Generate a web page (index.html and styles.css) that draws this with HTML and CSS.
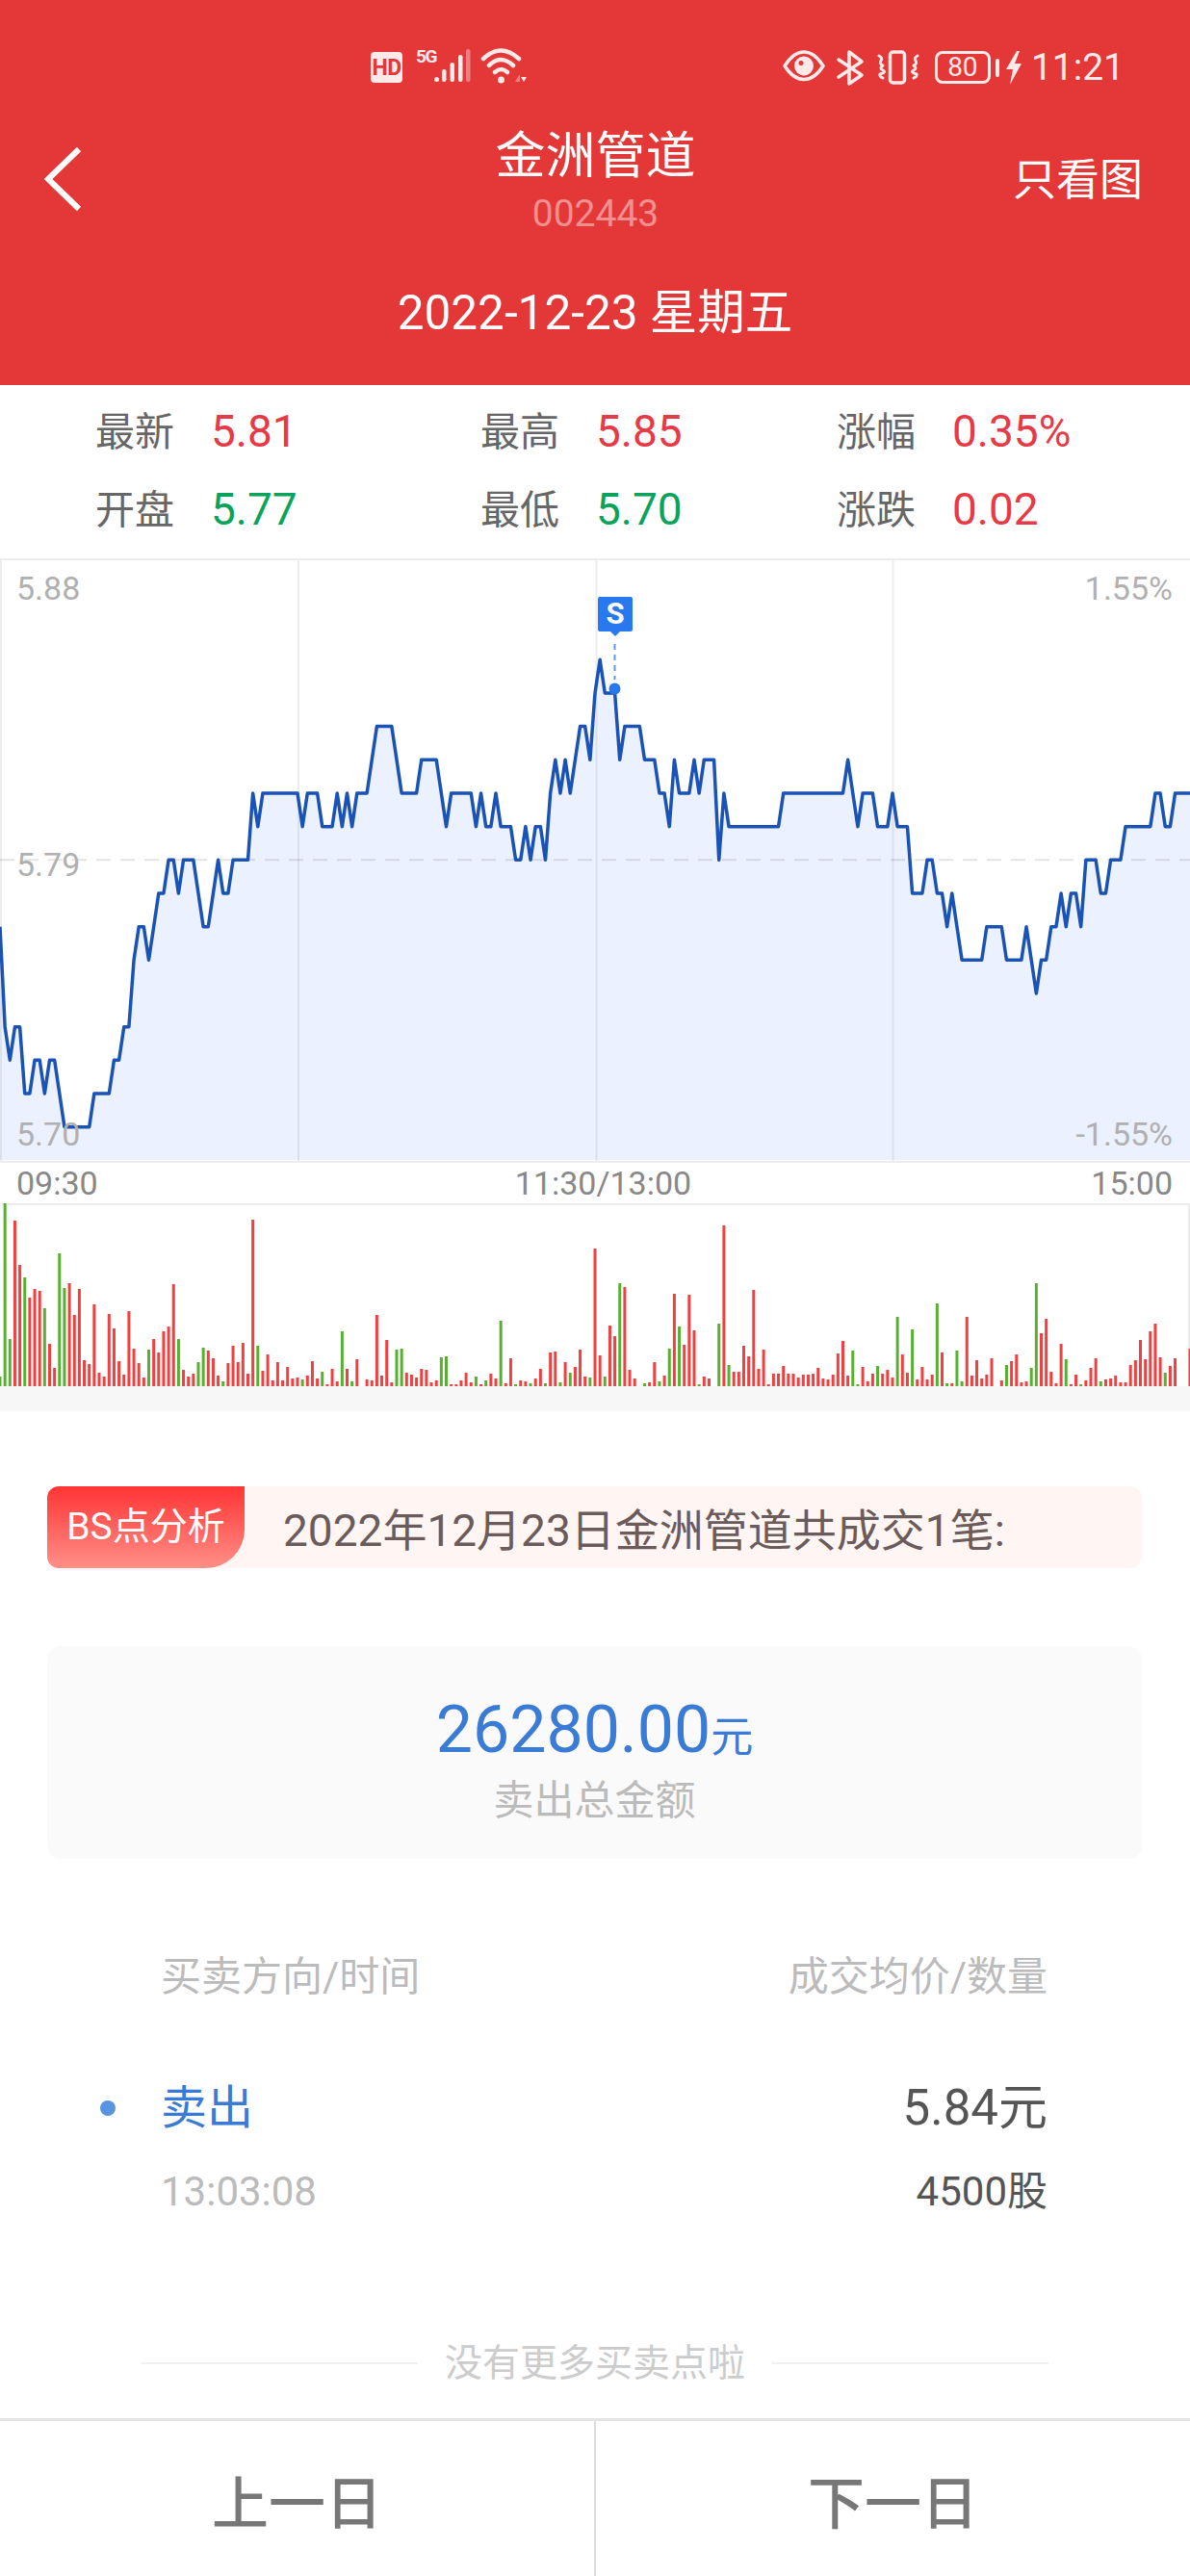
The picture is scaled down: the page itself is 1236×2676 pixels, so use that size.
FILE: index.html
```html
<!DOCTYPE html>
<html lang="zh-CN">
<head>
<meta charset="utf-8">
<title>金洲管道 BS点分析</title>
<link rel="stylesheet" href="styles.css">
</head>
<body>
<div class="page">
  <header class="header">
    <div class="status">
      <div class="status-left">
        <span class="hd">HD</span>
        <span class="net">5G</span>
        <svg class="ico ico-signal" viewBox="451 50 40 40">
          <circle class="fill" cx="453.5" cy="82.5" r="2.5"/>
          <rect class="fill" x="459" y="72" width="4.5" height="13" rx="2.2"/>
          <rect class="fill" x="467.5" y="65" width="4.5" height="20" rx="2.2"/>
          <rect class="fill" x="476" y="57" width="4.5" height="28" rx="2.2"/>
          <rect class="fill faint" x="484" y="51" width="4.5" height="34" rx="2.2"/>
        </svg>
        <svg class="ico ico-wifi" viewBox="498 50 54 40">
          <path class="line" d="M502 61Q520 44 539 61"/>
          <path class="line" d="M508 68Q520 56 533 68"/>
          <path class="line" d="M514 75Q520.500 69 527 75"/>
          <circle class="fill" cx="520.500" cy="83" r="3.500"/>
          <path class="fill faint" d="M535 85l4-7h1v7z"/>
          <path class="fill" d="M541 80h6l-3 5z"/>
        </svg>
      </div>
      <div class="status-right">
        <svg class="ico ico-eye" viewBox="815 50 44 40">
          <path class="line thin" d="M817 68.500Q826 54 837 54Q848 54 857 68.500Q848 82.500 837 82.500Q826 82.500 817 68.500Z"/>
          <circle class="fill" cx="837" cy="68.500" r="10"/>
          <circle class="hole" cx="834" cy="65.500" r="2.500"/>
        </svg>
        <svg class="ico ico-bt" viewBox="870 50 32 40">
          <path class="line thin" d="M873 62L897 78L884 87V54L897 64L873 80"/>
        </svg>
        <svg class="ico ico-vib" viewBox="911 50 49 40">
          <rect class="line thin" x="926.500" y="54" width="15" height="32" rx="3"/>
          <path class="line slim" d="M915 58q4 2 2 5t2 5q-4 3 0 5t-3 4q-1 2 3 4"/>
          <path class="line slim" d="M955 58q-4 2-2 5t-2 5q4 3 0 5t3 4q1 2-3 4"/>
        </svg>
        <div class="battery">80</div>
        <span class="nub"></span>
        <svg class="ico ico-bolt" viewBox="1046 50 18 40">
          <path class="fill" d="M1058 53L1047 72H1054L1051 88L1063 66H1056L1061 53Z"/>
        </svg>
        <span class="clock">11:21</span>
      </div>
    </div>
    <div class="nav">
      <svg class="back" viewBox="0 0 40 68">
        <path d="M36 3L4 34L36 65"/>
      </svg>
      <div class="title">
        <div class="name">金洲管道</div>
        <div class="code">002443</div>
      </div>
      <div class="only">只看图</div>
    </div>
    <div class="date">2022-12-23 星期五</div>
  </header>

  <section class="stats">
    <div class="stat"><span class="stat-k">最新</span><span class="stat-v up">5.81</span></div>
    <div class="stat"><span class="stat-k">最高</span><span class="stat-v up">5.85</span></div>
    <div class="stat"><span class="stat-k">涨幅</span><span class="stat-v up">0.35%</span></div>
    <div class="stat"><span class="stat-k">开盘</span><span class="stat-v down">5.77</span></div>
    <div class="stat"><span class="stat-k">最低</span><span class="stat-v down">5.70</span></div>
    <div class="stat"><span class="stat-k">涨跌</span><span class="stat-v up">0.02</span></div>
  </section>

  <section class="chart">
    <svg class="plot" viewBox="0 580 1236 628">
      <g transform="translate(0 893.3) scale(5.15 -34.67)">
        <path class="area" d="M0 -2L1 -5 2 -6 3 -5 4 -5 5 -7 6 -7 7 -6 8 -6 9 -7 10 -6 11 -6 12 -7 13 -8 18 -8 19 -7 22 -7 23 -6 24 -6 25 -5 26 -5 27 -3 28 -2 29 -2 30 -3 31 -2 32 -1 33 -1 34 0 35 0 36 -1 37 0 39 0 40 -1 41 -2 42 -2 43 -1 44 0 45 -1 46 -1 47 0 50 0 51 2 52 1 53 2 60 2 61 1 62 2 64 2 65 1 67 1 68 2 69 1 70 2 71 1 72 2 74 2 75 3 76 4 79 4 80 3 81 2 84 2 85 3 88 3 89 2 90 1 91 2 95 2 96 1 97 2 98 1 99 1 100 2 101 1 103 1 104 0 105 0 106 1 107 0 108 1 109 1 110 0 111 2 112 3 113 2 114 3 115 2 116 3 117 4 118 4 119 3 120 5 121 6 122 5 124 5 125 3 126 4 129 4 130 3 132 3 133 2 134 2 135 1 136 3 137 2 139 2 140 3 141 2 142 3 144 3 145 0 146 2 147 1 157 1 158 2 170 2 171 3 172 2 173 1 174 2 176 2 177 1 179 1 180 2 181 1 183 1 184 -1 186 -1 187 0 188 0 189 -1 190 -1 191 -2 192 -1 193 -2 194 -3 198 -3 199 -2 202 -2 203 -3 206 -3 207 -2 208 -3 209 -4 210 -3 211 -3 212 -2 213 -2 214 -1 215 -2 216 -1 217 -1 218 -2 219 0 221 0 222 -1 223 -1 224 0 226 0 227 1 232 1 233 2 234 2 235 1 236 1 237 2 240 2L240 -9L0 -9Z"/>
      </g>
      <path class="grid" d="M1 580V1207M310 580V1207M619.500 580V1207M927.500 580V1207M0 581H1236M0 1207H1236"/>
      <path class="mid" d="M0 893.300H1236"/>
      <g transform="translate(0 893.3) scale(5.15 -34.67)">
        <path class="price" d="M0 -2L1 -5 2 -6 3 -5 4 -5 5 -7 6 -7 7 -6 8 -6 9 -7 10 -6 11 -6 12 -7 13 -8 18 -8 19 -7 22 -7 23 -6 24 -6 25 -5 26 -5 27 -3 28 -2 29 -2 30 -3 31 -2 32 -1 33 -1 34 0 35 0 36 -1 37 0 39 0 40 -1 41 -2 42 -2 43 -1 44 0 45 -1 46 -1 47 0 50 0 51 2 52 1 53 2 60 2 61 1 62 2 64 2 65 1 67 1 68 2 69 1 70 2 71 1 72 2 74 2 75 3 76 4 79 4 80 3 81 2 84 2 85 3 88 3 89 2 90 1 91 2 95 2 96 1 97 2 98 1 99 1 100 2 101 1 103 1 104 0 105 0 106 1 107 0 108 1 109 1 110 0 111 2 112 3 113 2 114 3 115 2 116 3 117 4 118 4 119 3 120 5 121 6 122 5 124 5 125 3 126 4 129 4 130 3 132 3 133 2 134 2 135 1 136 3 137 2 139 2 140 3 141 2 142 3 144 3 145 0 146 2 147 1 157 1 158 2 170 2 171 3 172 2 173 1 174 2 176 2 177 1 179 1 180 2 181 1 183 1 184 -1 186 -1 187 0 188 0 189 -1 190 -1 191 -2 192 -1 193 -2 194 -3 198 -3 199 -2 202 -2 203 -3 206 -3 207 -2 208 -3 209 -4 210 -3 211 -3 212 -2 213 -2 214 -1 215 -2 216 -1 217 -1 218 -2 219 0 221 0 222 -1 223 -1 224 0 226 0 227 1 232 1 233 2 234 2 235 1 236 1 237 2 240 2"/>
      </g>
      <path class="pin-line" d="M638.500 669V706"/>
      <circle class="pin-dot" cx="638.500" cy="715.500" r="6"/>
    </svg>
    <div class="axis axis-l">
      <span class="tick">5.88</span>
      <span class="tick tick-mid">5.79</span>
      <span class="tick tick-low">5.70</span>
    </div>
    <div class="axis axis-r">
      <span class="tick">1.55%</span>
      <span class="tick tick-far">-1.55%</span>
    </div>
    <div class="pin">S</div>
  </section>

  <div class="times">
    <span>09:30</span>
    <span class="times-mid">11:30/13:00</span>
    <span class="times-end">15:00</span>
  </div>

  <svg class="volume" viewBox="0 1250 1236 190">
    <path class="grid" d="M0 1251H1236M1235 1250V1440"/>
    <g transform="translate(0 1440) scale(5.15 1)">
      <path class="bar bar-g" d="M0 0V-10M1 0V-190M2 0V-49M5 0V-113M9 0V-81M12 0V-138M13 0V-102M30 0V-38M36 0V-49M40 0V-25M41 0V-40M45 0V-5M52 0V-42M61 0V-7M65 0V-15M69 0V-57M71 0V-5M80 0V-38M81 0V-39M89 0V-30M90 0V-31M96 0V-10M98 0V-6M101 0V-68M104 0V-2M107 0V-3M110 0V-3M113 0V-4M115 0V-14M119 0V-9M122 0V-10M125 0V-107M130 0V-3M133 0V-5M135 0V-39M137 0V-62M141 0V-2M145 0V-65M147 0V-22M172 0V-37M173 0V-2M177 0V-21M181 0V-72M184 0V-59M189 0V-86M191 0V-3M193 0V-37M194 0V-5M203 0V-22M208 0V-19M209 0V-107M215 0V-28M218 0V-2M222 0V-5M235 0V-14"/>
      <path class="bar bar-r" d="M3 0V-172M4 0V-126M6 0V-92M7 0V-101M8 0V-99M10 0V-44M11 0V-19M14 0V-107M15 0V-74M16 0V-101M17 0V-27M18 0V-23M19 0V-85M20 0V-14M21 0V-10M22 0V-75M23 0V-60M24 0V-26M25 0V-12M26 0V-78M27 0V-39M28 0V-24M29 0V-9M31 0V-49M32 0V-35M33 0V-57M34 0V-62M35 0V-106M37 0V-17M38 0V-10M39 0V-13M42 0V-37M43 0V-29M44 0V-11M46 0V-24M47 0V-42M48 0V-25M49 0V-45M50 0V-13M51 0V-173M53 0V-16M54 0V-33M55 0V-6M56 0V-25M57 0V-6M58 0V-20M59 0V-8M60 0V-9M62 0V-11M63 0V-26M64 0V-8M66 0V-2M67 0V-18M68 0V-5M70 0V-18M72 0V-28M74 0V-7M75 0V-6M76 0V-74M77 0V-11M78 0V-48M79 0V-4M82 0V-14M83 0V-12M84 0V-9M85 0V-18M86 0V-17M87 0V-4M88 0V-6M91 0V-2M92 0V-2M93 0V-6M94 0V-14M95 0V-4M97 0V-2M99 0V-13M100 0V-8M102 0V-3M103 0V-29M105 0V-6M106 0V-5M108 0V-8M109 0V-18M111 0V-35M112 0V-36M114 0V-25M116 0V-20M117 0V-38M118 0V-10M120 0V-143M121 0V-32M123 0V-63M124 0V-52M126 0V-103M127 0V-17M128 0V-8M131 0V-4M132 0V-25M134 0V-11M136 0V-96M138 0V-43M139 0V-95M140 0V-58M142 0V-10M143 0V-8M146 0V-167M148 0V-15M149 0V-15M150 0V-42M151 0V-31M152 0V-100M153 0V-18M154 0V-38M155 0V-2M156 0V-13M157 0V-13M158 0V-21M159 0V-13M160 0V-13M161 0V-9M162 0V-12M163 0V-12M164 0V-13M165 0V-19M166 0V-8M167 0V-7M168 0V-12M169 0V-34M170 0V-47M171 0V-11M174 0V-20M175 0V-5M176 0V-13M178 0V-13M179 0V-17M180 0V-9M182 0V-33M183 0V-14M185 0V-7M186 0V-20M187 0V-7M188 0V-12M190 0V-35M192 0V-3M195 0V-72M196 0V-11M197 0V-27M198 0V-8M199 0V-12M200 0V-29M202 0V-6M204 0V-26M205 0V-33M206 0V-4M207 0V-5M210 0V-55M211 0V-70M212 0V-15M213 0V-3M214 0V-44M216 0V-2M217 0V-12M219 0V-6M220 0V-19M221 0V-29M223 0V-7M224 0V-8M225 0V-11M226 0V-4M227 0V-4M228 0V-22M229 0V-27M230 0V-48M231 0V-28M232 0V-57M233 0V-65M234 0V-30M236 0V-21M237 0V-29M240 0V-39"/>
    </g>
  </svg>
  <div class="band"></div>

  <section class="notice">
    <div class="badge">BS点分析</div>
    <div class="notice-text">2022年12月23日金洲管道共成交1笔:</div>
  </section>

  <section class="card">
    <div class="amount">26280.00<span class="unit">元</span></div>
    <div class="amount-label">卖出总金额</div>
  </section>

  <section class="table">
    <div class="thead"><span>买卖方向/时间</span><span>成交均价/数量</span></div>
    <div class="row-main">
      <span class="dot"></span>
      <span class="side">卖出</span>
      <span class="price-v">5.84元</span>
    </div>
    <div class="row-sub">
      <span class="time">13:03:08</span>
      <span class="qty">4500股</span>
    </div>
  </section>

  <div class="nomore">
    <span class="rule"></span>
    <span class="nomore-text">没有更多买卖点啦</span>
    <span class="rule"></span>
  </div>

  <footer class="footer">
    <div class="day">上一日</div>
    <div class="day day-next">下一日</div>
  </footer>
</div>
</body>
</html>
```

FILE: styles.css
```css
* { box-sizing: border-box; }
html, body { margin: 0; padding: 0; background: #fff; }
body { font-family: "Roboto", "Noto Sans CJK SC", sans-serif; }
.page { width: 1236px; height: 2676px; overflow: hidden; background: #fff; }

/* header */
.header { height: 400px; background: #e43737; color: #fff; padding-top: 50px; }
.status { display: flex; justify-content: space-between; height: 40px; padding: 0 68px 0 385px; color: #ffe9e9; }
.status-left, .status-right { display: flex; align-items: center; }
.ico { display: block; height: 40px; flex: none; overflow: visible; }
.ico .fill { fill: #ffe9e9; }
.ico .faint { opacity: .4; }
.ico .hole { fill: #e43737; }
.ico .line { fill: none; stroke: #ffe9e9; stroke-width: 4.5px; stroke-linecap: round; stroke-linejoin: round; }
.ico .thin { stroke-width: 3.5px; }
.ico .slim { stroke-width: 3px; }
.hd { width: 33px; height: 32px; border-radius: 4px; background: #ffe9e9; color: #e43737; font-size: 23px; font-weight: 700; line-height: 33px; text-align: center; letter-spacing: -.5px; }
.net { width: 19px; margin: -22px 0 0 14px; font-size: 19px; font-weight: 700; line-height: 18px; letter-spacing: -1.5px; }
.ico-signal { width: 40px; }
.ico-wifi { width: 54px; margin-left: 7px; }
.ico-eye { width: 44px; }
.ico-bt { width: 32px; margin-left: 11px; }
.ico-vib { width: 49px; margin-left: 9px; }
.battery { width: 58px; height: 34px; margin-left: 13px; border: 3px solid #ffe9e9; border-radius: 8px; font-size: 28px; line-height: 28px; text-align: center; }
.nub { width: 4px; height: 19px; margin-left: 5px; border-radius: 2px; background: #ffe9e9; }
.ico-bolt { width: 18px; margin-left: 6px; }
.clock { margin-left: 9px; font-size: 39px; line-height: 40px; }

.nav { display: grid; grid-template-columns: 1fr auto 1fr; align-items: center; height: 124px; margin-top: 36px; padding: 0 47px 0 48px; }
.back { display: block; width: 40px; height: 68px; margin: -4px 0 0 -2px; fill: none; stroke: #fff; stroke-width: 6px; }
.title { text-align: center; }
.name { padding-top: 6px; font-size: 52px; line-height: 62px; }
.code { font-size: 39px; line-height: 56px; color: #f28f8f; }
.only { justify-self: end; margin-right: 2px; font-size: 45px; line-height: 60px; }
.date { margin-top: 45px; font-size: 49.500px; line-height: 60px; text-align: center; }

/* stats */
.stats { display: grid; grid-template-columns: 400px 370px 1fr; grid-auto-rows: 81px; height: 180px; padding: 7px 0 0 99px; }
.stat { display: flex; align-items: center; }
.stat-k { width: 120px; margin-top: -6px; font-size: 41px; color: #666; }
.stat-v { font-size: 46px; }
.up { color: #e63a46; }
.down { color: #0aa35c; }

/* chart */
.chart { position: relative; height: 628px; }
.plot { display: block; width: 1236px; height: 628px; }
.area { fill: #ebf1fe; }
.price { fill: none; stroke: #1a53b5; stroke-width: 3.5px; stroke-linejoin: round; vector-effect: non-scaling-stroke; }
.grid { fill: none; stroke: #000; stroke-opacity: .07; stroke-width: 2px; }
.mid { fill: none; stroke: #000; stroke-opacity: .11; stroke-width: 2px; stroke-dasharray: 15 10; }
.pin-line { fill: none; stroke: #5a9af0; stroke-width: 2px; stroke-dasharray: 6 5; }
.pin-dot { fill: #2878f0; }
.axis { position: absolute; top: 13px; display: flex; flex-direction: column; }
.axis-l { left: 17px; }
.axis-r { right: 18px; align-items: flex-end; }
.tick { font-size: 34px; line-height: 36px; color: #b0b0b0; }
.tick-mid { margin-top: 251px; }
.tick-low { margin-top: 244px; }
.tick-far { margin-top: 531px; }
.pin { position: absolute; left: 621px; top: 40px; width: 36px; height: 36px; border-radius: 2px; background: #2878f0; color: #fff; font-size: 31px; font-weight: 700; line-height: 36px; text-align: center; }
.pin::after { content: ""; position: absolute; left: 12px; top: 35px; border: 6px solid transparent; border-top-color: #2878f0; border-bottom-width: 0; }

/* times + volume */
.times { display: grid; grid-template-columns: 1fr auto 1fr; align-items: center; height: 42px; padding: 0 18px 0 17px; font-size: 34px; color: #888; }
.times-mid { margin-left: 18px; }
.times-end { justify-self: end; }
.volume { display: block; width: 1236px; height: 190px; }
.bar { fill: none; stroke-width: 3px; vector-effect: non-scaling-stroke; }
.bar-r { stroke: #f04040; }
.bar-g { stroke: #58b032; }
.band { height: 26px; background: #f7f7f7; }

/* notice */
.notice { display: flex; align-items: center; height: 85px; margin: 78px 50px 0 49px; border-radius: 12px; background: #fff5f3; }
.badge { width: 205px; height: 85px; border-radius: 12px 0 40px 12px; background: linear-gradient(#ff3434, #ff8f87); color: #fff; font-size: 39px; line-height: 85px; text-align: center; }
.notice-text { margin-left: 40px; margin-top: -2px; font-size: 46px; color: #6b5b5b; }

/* card */
.card { height: 221px; margin: 81px 50px 0 49px; padding-top: 47px; border-radius: 14px; background: #fafafa; text-align: center; }
.amount { font-size: 68px; line-height: 80px; color: #3a7bd5; }
.unit { font-size: 44px; }
.amount-label { margin-top: -4px; font-size: 42px; line-height: 60px; color: #bbb; }

/* table */
.table { margin-top: 93px; padding-right: 148px; }
.thead { display: flex; justify-content: space-between; padding-left: 167px; font-size: 42px; line-height: 60px; color: #bbb; }
.row-main { display: flex; align-items: center; margin-top: 76px; padding-left: 104px; line-height: 60px; }
.dot { width: 16px; height: 16px; margin-right: 47px; border-radius: 50%; background: #5a93e0; }
.side { font-size: 48px; color: #3a7bd5; }
.price-v { margin-left: auto; font-size: 51px; color: #555; }
.row-sub { display: flex; justify-content: space-between; margin-top: 27px; padding-left: 167px; font-size: 42px; line-height: 60px; }
.time { color: #bbb; }
.qty { font-size: 42px; color: #555; }

/* no more */
.nomore { display: flex; align-items: center; gap: 28px; height: 50px; margin-top: 123px; padding: 0 147px; }
.rule { flex: 1; height: 2px; background: #f0f0f0; }
.nomore-text { font-size: 39px; line-height: 50px; color: #ccc; }

/* footer */
.footer { display: flex; height: 165px; margin-top: 32px; border-top: 3px solid #e4e4e4; }
.day { flex: 1; display: flex; align-items: center; justify-content: center; font-size: 59px; font-weight: 500; color: #777; }
.day-next { border-left: 2px solid #ddd; }
```
